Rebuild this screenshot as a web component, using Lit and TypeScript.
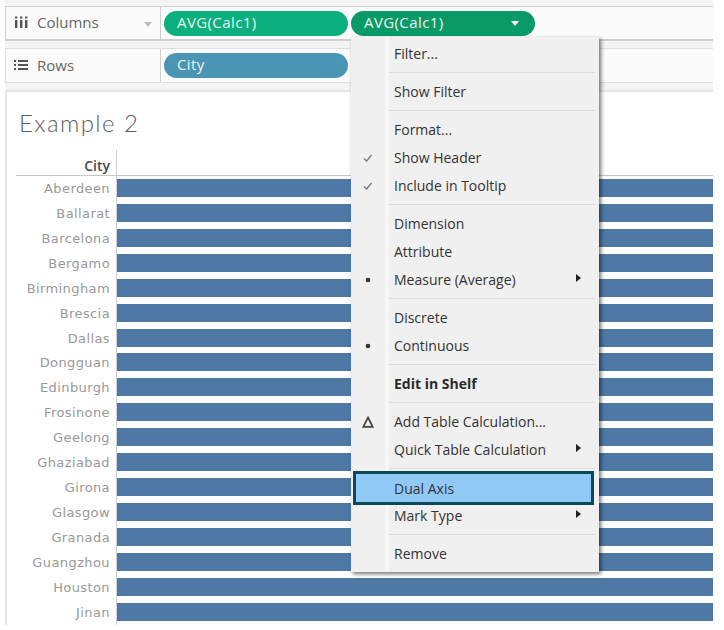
import { LitElement, html, css, nothing, svg } from 'lit';
import { customElement } from 'lit/decorators.js';

const CITIES = [
  'Aberdeen', 'Ballarat', 'Barcelona', 'Bergamo', 'Birmingham', 'Brescia',
  'Dallas', 'Dongguan', 'Edinburgh', 'Frosinone', 'Geelong', 'Ghaziabad',
  'Girona', 'Glasgow', 'Granada', 'Guangzhou', 'Houston', 'Jinan',
];

type MenuItem = {
  label: string;
  mark?: 'check' | 'dot' | 'delta';
  sub?: boolean;
  bold?: boolean;
  active?: boolean;
  sep?: boolean;
};

const MENU: MenuItem[] = [
  { label: 'Filter...' },
  { label: '', sep: true },
  { label: 'Show Filter' },
  { label: '', sep: true },
  { label: 'Format...' },
  { label: 'Show Header', mark: 'check' },
  { label: 'Include in Tooltip', mark: 'check' },
  { label: '', sep: true },
  { label: 'Dimension' },
  { label: 'Attribute' },
  { label: 'Measure (Average)', mark: 'dot', sub: true },
  { label: '', sep: true },
  { label: 'Discrete' },
  { label: 'Continuous', mark: 'dot' },
  { label: '', sep: true },
  { label: 'Edit in Shelf', bold: true },
  { label: '', sep: true },
  { label: 'Add Table Calculation...', mark: 'delta' },
  { label: 'Quick Table Calculation', sub: true },
  { label: '', sep: true },
  { label: 'Dual Axis', active: true },
  { label: 'Mark Type', sub: true },
  { label: '', sep: true },
  { label: 'Remove' },
];

const marks = {
  check: svg`<path d="M2 6.5 L4.6 9 L9.5 3" fill="none" stroke="#777" stroke-width="1.3"/>`,
  dot: svg`<circle cx="6" cy="6" r="2.3" fill="#333"/>`,
  delta: svg`<path d="M6 1.5 L10.7 10.8 H1.3 Z" fill="none" stroke="#444" stroke-width="1.7"/>`,
};

@customElement('app-root')
export class AppRoot extends LitElement {
  static styles = css`
    :host {
      display: block;
      width: 724px;
      height: 630px;
      background: #fff;
      font-family: 'Open Sans', 'Liberation Sans', sans-serif;
      overflow: hidden;
      position: relative;
    }

    .page {
      margin-right: 11px;
      margin-left: 5px;
      padding-top: 6px;
      display: flex;
      flex-direction: column;
      background: linear-gradient(#f4f4f4, #f4f4f4) no-repeat 0 0 / 100% 92px;
    }

    .shelf {
      display: flex;
      height: 35px;
      box-sizing: border-box;
      border: 1px solid #d0d0d0;
      border-width: 1px 0 2px 1px;
      background: #fbfbfb;
    }

    .shelf + .shelf {
      margin-top: 7px;
      border-bottom-width: 1px;
      border-color: #e0e0e0;
    }

    .shelf-label {
      width: 155px;
      flex: none;
      box-sizing: border-box;
      border-right: 1px solid #d0d0d0;
      display: flex;
      align-items: center;
      padding: 0 0 2px 8px;
      color: #666;
      font-size: 15px;
      gap: 9px;
      position: relative;
    }

    .shelf-label svg { flex: none; }

    .caret {
      position: absolute;
      right: 8px;
      top: 15px;
      width: 0;
      height: 0;
      border: 4px solid transparent;
      border-top: 5px solid #bbb;
      border-bottom: 0;
    }

    .pills {
      display: flex;
      align-items: center;
      padding-left: 3px;
      gap: 3px;
    }

    .pill {
      width: 184px;
      height: 25px;
      box-sizing: border-box;
      border-radius: 13px;
      padding-left: 13px;
      color: #e8f5ef;
      font-size: 15px;
      letter-spacing: 0.4px;
      line-height: 23px;
      position: relative;
    }

    .pill.light { background: #0bb07e; }
    .pill.dark { background: #0a9a68; }
    .pill.blue { background: #4a94b4; }

    .pill .drop {
      position: absolute;
      right: 16px;
      top: 10px;
      width: 0;
      height: 0;
      border: 4px solid transparent;
      border-top: 5px solid #fff;
      border-bottom: 0;
    }

    .sheet {
      margin-top: 7px;
      border-top: 2px solid #e4e4e4;
      border-left: 2px solid #e4e4e4;
      padding: 0 0 0 9px;
      background: #fff;
    }

    .title {
      font-family: 'Lato', 'Open Sans', sans-serif;
      font-size: 24px;
      font-weight: 300;
      color: #5f5f5f;
      letter-spacing: 1.4px;
      height: 58px;
      line-height: 62px;
      padding-left: 3px;
    }

    .head {
      display: flex;
      height: 26px;
      box-sizing: border-box;
      border-bottom: 1px solid #c8c8c8;
    }

    .axis {
      width: 101px;
      flex: none;
      box-sizing: border-box;
      border-right: 1px solid #d0d0d0;
    }

    .head .axis {
      text-align: right;
      padding-right: 6px;
      font-size: 14px;
      font-weight: 600;
      line-height: 31px;
      color: #4a4a4a;
    }

    .row {
      display: flex;
      height: 24.93px;
    }

    .row .axis {
      text-align: right;
      padding-right: 6px;
      font-family: 'DejaVu Sans', sans-serif;
      font-size: 13px;
      letter-spacing: 0.4px;
      line-height: 25px;
      color: #999;
    }

    .bar {
      flex: 1;
      height: 18px;
      margin-top: 3px;
      background: #4e79a7;
    }

    .menu {
      position: absolute;
      left: 351px;
      top: 37px;
      width: 248px;
      height: 535px;
      box-sizing: border-box;
      background: #f0f0f0;
      box-shadow: 2px 2px 4px rgba(0, 0, 0, 0.55);
      padding-top: 3px;
      color: #333;
      font-size: 14px;
    }

    .menu::before {
      content: '';
      position: absolute;
      left: 34px;
      top: 0;
      bottom: 0;
      width: 4px;
      background: #f6f6f6;
    }

    .item {
      height: 28px;
      line-height: 28px;
      padding-left: 43px;
      position: relative;
      white-space: nowrap;
    }

    .item.bold { font-weight: 700; color: #2b2b2b; }

    .item.active {
      margin: -3px 5px -3px 2px;
      padding-left: 38px;
      height: 34px;
      box-sizing: border-box;
      border: 3px solid #0e4a55;
      background: #90c8f6;
      line-height: 29px;
      z-index: 1;
    }

    .sep {
      height: 1px;
      margin: 4px 4px 5px 38px;
      background: #dcdcdc;
      position: relative;
    }

    .mark {
      position: absolute;
      left: 11px;
      top: 8px;
      width: 12px;
      height: 12px;
    }

    .sub {
      position: absolute;
      right: 18px;
      top: 8px;
      width: 0;
      height: 0;
      border: 4px solid transparent;
      border-left: 5px solid #222;
      border-right: 0;
    }
  `;

  private renderItem(item: MenuItem) {
    if (item.sep) return html`<div class="sep"></div>`;
    const cls = `item${item.bold ? ' bold' : ''}${item.active ? ' active' : ''}`;
    return html`<div class=${cls}>
      ${item.mark ? html`<svg class="mark" viewBox="0 0 12 12">${marks[item.mark]}</svg>` : nothing}
      ${item.label}
      ${item.sub ? html`<span class="sub"></span>` : nothing}
    </div>`;
  }

  render() {
    return html`
      <div class="page">
        <div class="shelf">
          <div class="shelf-label">
            <svg width="14" height="14" viewBox="0 0 14 14">
              <path d="M1 5h2.4v8H1zM6 5h2.4v8H6zM11 5h2.4v8H11z" fill="#555"/>
              <path d="M1 1.5h2.4v2H1zM6 1.5h2.4v2H6zM11 1.5h2.4v2H11z" fill="#555"/>
            </svg>
            Columns
            <span class="caret"></span>
          </div>
          <div class="pills">
            <div class="pill light">AVG(Calc1)</div>
            <div class="pill dark">AVG(Calc1)<span class="drop"></span></div>
          </div>
        </div>
        <div class="shelf">
          <div class="shelf-label">
            <svg width="14" height="14" viewBox="0 0 14 14">
              <path d="M0 2h2v2H0zM4 2h10v2H4zM0 6h2v2H0zM4 6h10v2H4zM0 10h2v2H0zM4 10h10v2H4z" fill="#555"/>
            </svg>
            Rows
          </div>
          <div class="pills">
            <div class="pill blue">City</div>
          </div>
        </div>
        <div class="sheet">
          <div class="title">Example 2</div>
          <div class="head"><div class="axis">City</div></div>
          ${CITIES.map(c => html`<div class="row"><div class="axis">${c}</div><div class="bar"></div></div>`)}
        </div>
      </div>
      <div class="menu">${MENU.map(i => this.renderItem(i))}</div>
    `;
  }
}
